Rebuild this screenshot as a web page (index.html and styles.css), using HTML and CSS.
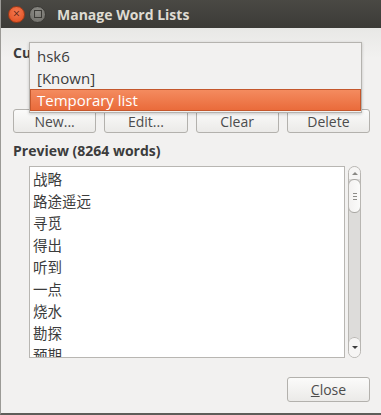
FILE: index.html
```html
<!DOCTYPE html>
<html lang="en">
<head>
  <meta charset="UTF-8" />
  <title>Manage Word Lists</title>
  <link rel="stylesheet" href="styles.css">
</head>
<body>
  <div class="window">
    <div class="titlebar">
      <span class="wm-btn wm-close">&times;</span>
      <span class="wm-btn wm-min"></span>
      <span class="title">Manage Word Lists</span>
    </div>

    <div class="content">
      <div class="label">Current list:</div>
      <div class="combo">Temporary list</div>

      <div class="actions">
        <button class="btn">New...</button>
        <button class="btn">Edit...</button>
        <button class="btn">Clear</button>
        <button class="btn">Delete</button>
      </div>

      <div class="label">Preview (8264 words)</div>
      <div class="preview">
        <div class="word-list">
          <div class="word">战略</div>
          <div class="word">路途遥远</div>
          <div class="word">寻觅</div>
          <div class="word">得出</div>
          <div class="word">听到</div>
          <div class="word">一点</div>
          <div class="word">烧水</div>
          <div class="word">勘探</div>
          <div class="word">预期</div>
        </div>
        <div class="scrollbar">
          <span class="arrow up"></span>
          <span class="thumb"><i></i><i></i><i></i></span>
          <span class="arrow down"></span>
        </div>
      </div>

      <div class="footer">
        <button class="btn"><u>C</u>lose</button>
      </div>
    </div>

    <div class="popup">
      <div class="popup-item">hsk6</div>
      <div class="popup-item">[Known]</div>
      <div class="popup-item selected">Temporary list</div>
    </div>
  </div>
</body>
</html>
```

FILE: styles.css
```css
* {
  box-sizing: border-box;
  margin: 0;
  padding: 0;
}
body {
  width: 381px;
  height: 415px;
  overflow: hidden;
  font-family: 'Open Sans', 'Noto Sans', sans-serif;
  font-size: 14px;
  color: #3c3c3c;
}
.window {
  position: relative;
  width: 381px;
  height: 415px;
  background: #f2f1f0;
  border-left: 1px solid #9b9a96;
  border-bottom: 2px solid #5e5d59;
}
.titlebar {
  height: 28px;
  display: flex;
  align-items: center;
  background: linear-gradient(#4a4944, #3c3b37);
  padding-left: 7px;
}
.wm-btn {
  width: 17px;
  height: 17px;
  border-radius: 50%;
  display: flex;
  align-items: center;
  justify-content: center;
  margin-right: 4px;
  font-size: 12px;
  line-height: 1;
  color: #5a2414;
}
.wm-close {
  background: radial-gradient(circle at 50% 35%, #f47a52, #df4b1c);
  border: 1px solid #9e3a18;
}
.wm-min {
  background: radial-gradient(circle at 50% 35%, #8e8d88, #6c6b66);
  border: 1px solid #3a3935;
}
.wm-min::after {
  content: '';
  width: 6px;
  height: 6px;
  border: 1px solid #3c3b37;
}
.title {
  margin-left: 7px;
  font-weight: bold;
  font-size: 14px;
  color: #dfdbd2;
}
.content {
  padding: 0 11px 0 12px;
  background: linear-gradient(#e8e8e6, #f2f1f0 30px);
}
.label {
  font-weight: bold;
  padding-top: 15px;
  height: 37px;
  line-height: 20px;
}
.combo {
  height: 44px;
  margin-left: 16px;
  color: transparent;
}
.actions {
  display: grid;
  grid-template-columns: repeat(4, 1fr);
  gap: 8px;
}
.btn {
  height: 24px;
  font-family: inherit;
  font-size: 14px;
  color: #4c4c4c;
  background: linear-gradient(#fbfbfa, #ebeae8);
  border: 1px solid #b3b1ad;
  border-radius: 3px;
}
.btn u {
  text-decoration-thickness: 1px;
}
.actions + .label {
  padding-top: 8px;
  height: 33px;
}
.preview {
  display: flex;
  margin-left: 16px;
  gap: 3px;
  height: 192px;
}
.word-list {
  width: 316px;
  background: #fff;
  border: 1px solid #b8b6b2;
  padding: 1px 0 0 3px;
  overflow: hidden;
  font-family: 'Noto Sans CJK SC', sans-serif;
  font-size: 14.5px;
  color: #3c3c3c;
}
.word {
  height: 22px;
  line-height: 22px;
}
.scrollbar {
  width: 13px;
  border: 1px solid #b8b6b2;
  border-radius: 7px;
  background: #dddcda;
  display: flex;
  flex-direction: column;
  overflow: hidden;
}
.arrow {
  height: 12px;
  background: #f6f5f4;
  display: flex;
  justify-content: center;
  align-items: center;
}
.arrow::after {
  content: '';
  border-left: 3px solid transparent;
  border-right: 3px solid transparent;
}
.arrow.up::after {
  border-bottom: 3px solid #8a8985;
}
.arrow.down {
  margin-top: auto;
  height: 20px;
  border-top: 1px solid #b8b6b2;
  border-radius: 6px 6px 0 0;
}
.arrow.down::after {
  border-top: 3px solid #3c3c3c;
}
.thumb {
  height: 34px;
  background: linear-gradient(90deg, #f3f2f1, #fbfbfa);
  border: 1px solid #a9a7a3;
  border-radius: 6px;
  margin: 0 -1px;
  display: flex;
  flex-direction: column;
  align-items: center;
  justify-content: center;
  gap: 2px;
}
.thumb i {
  width: 4px;
  height: 1px;
  background: #8d8c88;
}
.footer {
  display: flex;
  justify-content: flex-end;
  padding-top: 19px;
}
.footer .btn {
  width: 83px;
  height: 25px;
}
.popup {
  position: absolute;
  left: 28px;
  top: 42px;
  width: 333px;
  height: 71px;
  background: #f2f1f0;
  border: 1px solid #b5b3af;
  padding-top: 2px;
  box-shadow: 0 1px 3px rgba(0,0,0,0.2);
}
.popup-item {
  height: 22px;
  line-height: 22px;
  padding-left: 7px;
  font-size: 15px;
  color: #3c3c3c;
}
.popup-item.selected {
  background: linear-gradient(#f48b5f, #ea6b3b);
  border: 1px solid #c4572c;
  color: #fff;
  line-height: 20px;
  padding-left: 6px;
}
```
